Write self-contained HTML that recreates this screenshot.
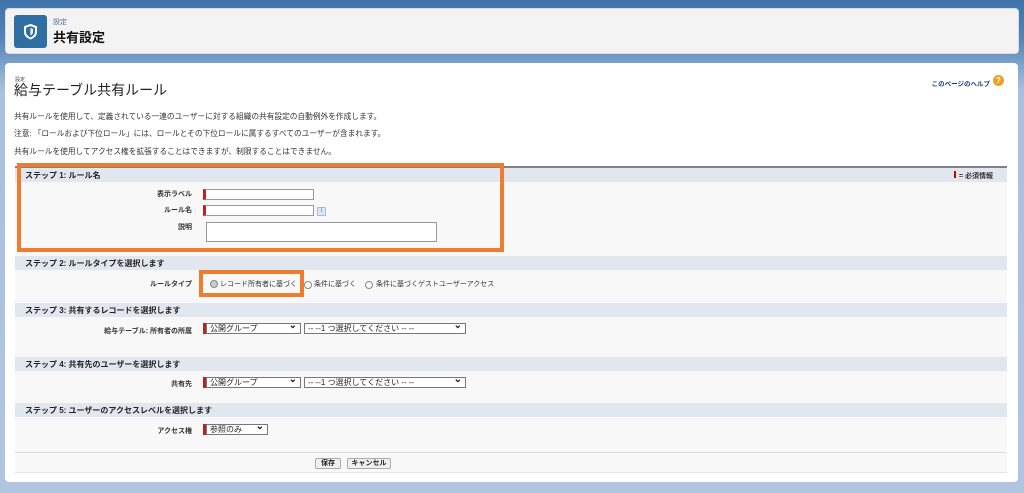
<!DOCTYPE html>
<html><head><meta charset="utf-8"><style>
*{margin:0;padding:0;box-sizing:border-box}
body{width:1024px;height:493px;overflow:hidden;position:relative;font-family:"Liberation Sans","Noto Sans CJK JP",sans-serif;background:linear-gradient(#3e72a8 0,#5585b8 40px,#a9c0de 90px,#b0c6e0 493px);color:#222}
.a{position:absolute}
.hdr{left:5px;top:8px;width:1014px;height:46px;background:#f3f3f3;border-radius:4px;border:1px solid #d6dce4}
.ic{left:14px;top:15px;width:33px;height:33px;background:#2f6fa1;border-radius:3px}
.main{left:5px;top:63px;width:1013px;height:419px;background:#fff;border-radius:4px}
.t{font-size:7.7px;color:#333;white-space:nowrap}
.panel{left:15px;top:166px;width:992px;height:307px;background:#f8f8f8;border-top:2px solid #7f8288;border-bottom:1px solid #e5e5e5}
.sh{left:15px;width:992px;height:14px;background:#e2e6ee;font-size:8px;font-weight:bold;padding:2px 0 0 10px;color:#222}
.lb{font-size:7px;font-weight:bold;color:#333;text-align:right;width:120px}
.in{background:#fff;border:1px solid #999;height:11px}
.rq{border-left:3px solid #b22;}
.sel{background:#fff;border:1px solid #777;height:11px;font-size:8px;line-height:9px;padding-left:3px;white-space:nowrap}
.sel:after{content:"⌄";position:absolute;right:3px;top:-3px;font-size:10px;font-weight:bold}
.ob{border:4px solid #ee7d2f}
.btn{border:1px solid #aaa;background:#f0f0f0;font-size:7px;font-weight:bold;height:11px;line-height:9px;text-align:center;border-radius:2px}
.rd{width:8px;height:8px;border:1px solid #888;border-radius:50%;background:#fff}
</style></head><body>
<div class="a hdr"></div>
<div class="a ic"><svg width="33" height="33" viewBox="0 0 33 33"><path d="M16.5 10 L22 12 V17 C22 20.5 19 22.5 16.5 23.5 C14 22.5 11 20.5 11 17 V12 Z" fill="none" stroke="#fff" stroke-width="2"/><path d="M16.5 13 L19 14 V17 C19 18.5 17.7 19.8 16.5 20.4 Z" fill="#fff"/></svg></div>
<div class="a" style="left:53px;top:17px;font-size:7px;color:#4a6a8a">設定</div>
<div class="a" style="left:53px;top:27px;font-size:13px;font-weight:bold;color:#111">共有設定</div>
<div class="a main"></div>
<div class="a" style="left:15px;top:76px;font-size:5px;color:#444">設定</div>
<div class="a" style="left:14px;top:80px;font-size:14px;color:#222">給与テーブル共有ルール</div>
<div class="a t" style="left:890px;width:100px;text-align:right;top:78px;font-size:6.5px;color:#1a3d6d;font-weight:bold">このページのヘルプ</div>
<div class="a" style="left:993px;top:75px;width:11px;height:11px;border-radius:50%;background:#f0a020;color:#fff;font-size:8px;text-align:center;line-height:11px;font-weight:bold">?</div>
<div class="a t" style="left:14px;top:111px">共有ルールを使用して、定義されている一連のユーザーに対する組織の共有設定の自動例外を作成します。</div>
<div class="a t" style="left:14px;top:128px">注意: 「ロールおよび下位ロール」には、ロールとその下位ロールに属するすべてのユーザーが含まれます。</div>
<div class="a t" style="left:14px;top:146px">共有ルールを使用してアクセス権を拡張することはできますが、制限することはできません。</div>
<div class="a panel"></div>
<div class="a sh" style="top:168px">ステップ 1: ルール名</div>
<div class="a" style="left:954px;top:171px;width:2px;height:7px;background:#c00"></div>
<div class="a t" style="left:959px;top:171px;font-size:7px;font-weight:bold">= 必須情報</div>
<div class="a lb" style="left:72px;top:189px">表示ラベル</div>
<div class="a in rq" style="left:203px;top:189px;width:111px"></div>
<div class="a lb" style="left:72px;top:205px">ルール名</div>
<div class="a in rq" style="left:203px;top:205px;width:111px"></div>
<div class="a" style="left:317px;top:207px;width:9px;height:9px;background:#dde7f3;border:1px solid #a9bcd3;font-size:6px;text-align:center;line-height:7px;color:#36c">i</div>
<div class="a lb" style="left:72px;top:222px">説明</div>
<div class="a in" style="left:206px;top:222px;width:231px;height:20px"></div>
<div class="a sh" style="top:256px">ステップ 2: ルールタイプを選択します</div>
<div class="a lb" style="left:72px;top:279px">ルールタイプ</div>
<div class="a rd" style="left:210px;top:280px;background:#ccc"></div>
<div class="a t" style="left:220px;top:279px;font-size:7px">レコード所有者に基づく</div>
<div class="a rd" style="left:304px;top:281px"></div>
<div class="a t" style="left:314px;top:279px;font-size:7px">条件に基づく</div>
<div class="a rd" style="left:365px;top:281px"></div>
<div class="a t" style="left:376px;top:279px;font-size:7px">条件に基づくゲストユーザーアクセス</div>
<div class="a sh" style="top:303px">ステップ 3: 共有するレコードを選択します</div>
<div class="a lb" style="left:72px;top:326px">給与テーブル: 所有者の所属</div>
<div class="a rq" style="left:203px;top:323px;height:11px"></div>
<div class="a sel" style="left:206px;top:323px;width:95px">公開グループ</div>
<div class="a sel" style="left:304px;top:323px;width:162px">-- --1 つ選択してください -- --</div>
<div class="a sh" style="top:357px">ステップ 4: 共有先のユーザーを選択します</div>
<div class="a lb" style="left:72px;top:379px">共有先</div>
<div class="a rq" style="left:203px;top:377px;height:11px"></div>
<div class="a sel" style="left:206px;top:377px;width:95px">公開グループ</div>
<div class="a sel" style="left:304px;top:377px;width:162px">-- --1 つ選択してください -- --</div>
<div class="a sh" style="top:403px">ステップ 5: ユーザーのアクセスレベルを選択します</div>
<div class="a lb" style="left:72px;top:426px">アクセス権</div>
<div class="a rq" style="left:203px;top:424px;height:11px"></div>
<div class="a sel" style="left:206px;top:424px;width:62px">参照のみ</div>
<div class="a" style="left:15px;top:452px;width:992px;height:1px;background:#ddd"></div>
<div class="a btn" style="left:315px;top:458px;width:26px">保存</div>
<div class="a btn" style="left:347px;top:458px;width:44px">キャンセル</div>
<div class="a ob" style="left:17px;top:163px;width:487px;height:89px"></div>
<div class="a ob" style="left:199px;top:270px;width:105px;height:27px"></div>
</body></html>
